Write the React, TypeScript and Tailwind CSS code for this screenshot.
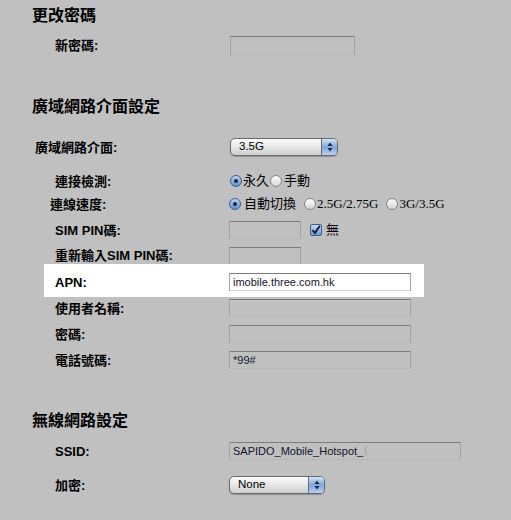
import type { ReactNode } from "react";

const label = "font-['Liberation_Sans','Noto_Sans_CJK_TC',sans-serif] text-[13px] font-bold text-black";
const serif = "font-['Liberation_Serif','Noto_Sans_CJK_TC',serif] text-[13px] text-black";

function Heading({ children, className = "" }: { children: ReactNode; className?: string }) {
  return (
    <div className={`flex h-[20px] items-center pl-[32px] font-['Liberation_Sans','Noto_Sans_CJK_TC',sans-serif] text-[16px] font-bold text-black ${className}`}>
      {children}
    </div>
  );
}

function Row({
  name,
  pad = "pl-[55px]",
  height = "h-[18px]",
  className = "",
  children,
}: {
  name: string;
  pad?: string;
  height?: string;
  className?: string;
  children?: ReactNode;
}) {
  return (
    <div className={`flex items-center ${height} ${className}`}>
      <div className={`w-[229px] shrink-0 leading-none ${pad} ${label}`}>{name}</div>
      {children}
    </div>
  );
}

function Field({ w, value, white = false }: { w: string; value?: ReactNode; white?: boolean }) {
  return (
    <div
      className={`flex h-[18px] ${w} items-center border border-[#a3a3a3] border-t-[#7c7c7c] border-b-[#b6b6b6] pl-[3px] font-['Liberation_Sans',sans-serif] text-[11px] text-[#14142e] ${
        white ? "bg-white border-b-[#d4d4d4]" : "bg-[#c0c0c0]"
      }`}
    >
      {value}
    </div>
  );
}

function Select({ w, value }: { w: string; value: string }) {
  return (
    <div
      className={`flex h-[18px] ${w} items-stretch overflow-hidden rounded-[5px] border border-[#6a6a6a] bg-gradient-to-b from-[#fbfbfb] via-[#e6e6e6] to-[#cdcdcd] shadow-[0_1px_1px_rgba(0,0,0,0.25)]`}
    >
      <div className="flex flex-1 items-center pl-[8px] font-['Liberation_Sans',sans-serif] text-[11.5px] text-black">{value}</div>
      <div className="flex w-[16px] items-center justify-center border-l border-[#6a6a6a] bg-gradient-to-b from-[#d3e4fa] via-[#7ca6dd] to-[#b4d0f2]">
        <svg width="6" height="10" viewBox="0 0 6 10">
          <path d="M3 0.5 L5.5 4 H0.5 Z" fill="#1b2a40" />
          <path d="M3 9.5 L5.5 6 H0.5 Z" fill="#1b2a40" />
        </svg>
      </div>
    </div>
  );
}

function Radio({ on = false, className = "" }: { on?: boolean; className?: string }) {
  return on ? (
    <span className={`flex h-[12px] w-[12px] shrink-0 items-center justify-center rounded-full border border-[#3e5f8a] bg-gradient-to-b from-[#b8d3f4] to-[#5d91d6] ${className}`}>
      <span className="block h-[4px] w-[4px] rounded-full bg-[#16263d]" />
    </span>
  ) : (
    <span className={`block h-[12px] w-[12px] shrink-0 rounded-full border border-[#858585] bg-gradient-to-b from-[#fdfdfd] to-[#d6d6d6] ${className}`} />
  );
}

export default function App() {
  return (
    <div className="min-h-screen bg-[#c0c0c0] pt-[6px]">
      <Heading>更改密碼</Heading>
      <Row name="新密碼:" height="h-[19px]" className="mt-[10px]">
        <div className="ml-[1px]">
          <div className="flex h-[19px] w-[125px] border border-[#a3a3a3] border-t-[#7c7c7c] border-b-[#b6b6b6] bg-[#c0c0c0]" />
        </div>
      </Row>

      <Heading className="mt-[42px]">廣域網路介面設定</Heading>
      <Row name="廣域網路介面:" pad="pl-[35px]" className="mt-[21px]">
        <div className="ml-[1px]">
          <Select w="w-[108px]" value="3.5G" />
        </div>
      </Row>

      <Row name="連接檢測:" height="h-[14px]" className="mt-[18px]">
        <div className={`ml-[1px] flex items-center ${serif}`}>
          <Radio on />
          <span className="ml-[1px]">永久</span>
          <Radio className="ml-[1px]" />
          <span className="ml-[2px]">手動</span>
        </div>
      </Row>
      <Row name="連線速度:" pad="pl-[50px]" height="h-[14px]" className="mt-[9px]">
        <div className={`flex items-center ${serif} text-[13.5px]`}>
          <Radio on />
          <span className="ml-[3px] text-[13px]">自動切換</span>
          <Radio className="ml-[8px]" />
          <span className="ml-[1px]">2.5G/2.75G</span>
          <Radio className="ml-[8px]" />
          <span className="ml-[1px]">3G/3.5G</span>
        </div>
      </Row>

      <Row name="SIM PIN碼:" className="mt-[10px]">
        <Field w="w-[72px]" />
        <span className="ml-[9px] flex h-[12px] w-[12px] items-center justify-center rounded-[2px] border border-[#3e5f8a] bg-gradient-to-b from-[#c4dbf7] to-[#6b9ad8]">
          <svg width="10" height="10" viewBox="0 0 10 10">
            <path d="M1.5 5.2 L4 8 L8.8 0.8" fill="none" stroke="#101820" strokeWidth="1.8" />
          </svg>
        </span>
        <span className={`ml-[4px] ${serif}`}>無</span>
      </Row>

      <div className="mt-[8px] flex h-[17px] items-start">
        <div className={`w-[229px] shrink-0 self-center pl-[55px] leading-none ${label}`}>重新輸入SIM PIN碼:</div>
        <div className="h-[17px] w-[72px] border border-b-0 border-[#a3a3a3] border-t-[#7c7c7c]" />
      </div>

      <div className="ml-[44px] w-[380px] bg-white pb-[6px] pt-[9px]">
        <div className="flex h-[18px] items-center">
          <div className={`w-[185px] shrink-0 pl-[11px] leading-none ${label}`}>APN:</div>
          <Field w="w-[182px]" white value="imobile.three.com.hk" />
        </div>
      </div>

      <Row name="使用者名稱:" className="mt-[2px]">
        <Field w="w-[182px]" />
      </Row>
      <Row name="密碼:" className="mt-[8px]">
        <Field w="w-[182px]" />
      </Row>
      <Row name="電話號碼:" className="mt-[8px]">
        <Field w="w-[182px]" value="*99#" />
      </Row>

      <Heading className="mt-[42px]">無線網路設定</Heading>
      <Row name="SSID:" className="mt-[11px]">
        <Field
          w="w-[232px]"
          value={
            <>
              SAPIDO_Mobile_Hotspot_<span className="ml-[1px] text-[9px] text-[#9a9a9a]">(</span>
            </>
          }
        />
      </Row>
      <Row name="加密:" className="mt-[16px]">
        <Select w="w-[96px]" value="None" />
      </Row>
    </div>
  );
}
